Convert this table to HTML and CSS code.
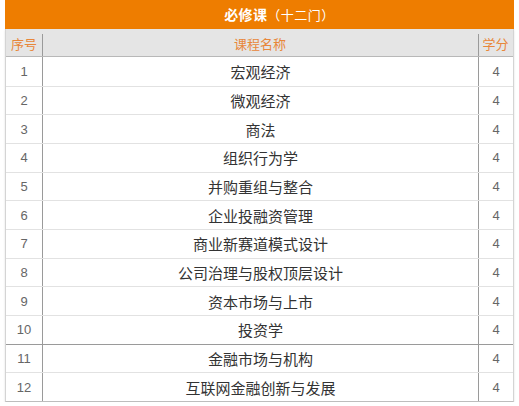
FILE: index.html
```html
<!DOCTYPE html>
<html lang="zh">
<head>
<meta charset="utf-8">
<link rel="stylesheet" href="styles.css">
</head>
<body>
<div class="wrap">
  <div class="title"><span class="strong">必修课</span><span class="sub">（十二门）</span></div>
  <div class="table">
    <div class="row head">
      <div class="c1">序号</div>
      <div class="c2">课程名称</div>
      <div class="c3">学分</div>
    </div>
    <div class="row"><div class="c1 num">1</div><div class="c2">宏观经济</div><div class="c3 num">4</div></div>
    <div class="row"><div class="c1 num">2</div><div class="c2">微观经济</div><div class="c3 num">4</div></div>
    <div class="row"><div class="c1 num">3</div><div class="c2">商法</div><div class="c3 num">4</div></div>
    <div class="row"><div class="c1 num">4</div><div class="c2">组织行为学</div><div class="c3 num">4</div></div>
    <div class="row"><div class="c1 num">5</div><div class="c2">并购重组与整合</div><div class="c3 num">4</div></div>
    <div class="row"><div class="c1 num">6</div><div class="c2">企业投融资管理</div><div class="c3 num">4</div></div>
    <div class="row"><div class="c1 num">7</div><div class="c2">商业新赛道模式设计</div><div class="c3 num">4</div></div>
    <div class="row"><div class="c1 num">8</div><div class="c2">公司治理与股权顶层设计</div><div class="c3 num">4</div></div>
    <div class="row"><div class="c1 num">9</div><div class="c2">资本市场与上市</div><div class="c3 num">4</div></div>
    <div class="row"><div class="c1 num">10</div><div class="c2">投资学</div><div class="c3 num">4</div></div>
    <div class="row dark"><div class="c1 num">11</div><div class="c2">金融市场与机构</div><div class="c3 num">4</div></div>
    <div class="row"><div class="c1 num">12</div><div class="c2">互联网金融创新与发展</div><div class="c3 num">4</div></div>
  </div>
</div>
</body>
</html>
```

FILE: styles.css
```css
html, body {
  margin: 0;
  padding: 0;
  background: #ffffff;
}
body {
  font-family: "Noto Sans CJK SC", "Liberation Sans", sans-serif;
}
.wrap {
  margin-left: 5px;
  width: 509px;
}
.title {
  height: 29px;
  background: #ee7d00;
  color: #ffffff;
  font-size: 14px;
  line-height: 29px;
  text-align: center;
  padding-left: 40px;
  text-spacing-trim: space-all;
}
.title .strong {
  font-weight: bold;
  letter-spacing: 0.3px;
}
.title .sub {
  font-weight: normal;
  font-size: 13px;
  letter-spacing: 0.5px;
}
.table {
  border-left: 1px solid #d4d4d4;
  border-right: 1px solid #d4d4d4;
  border-bottom: 1px solid #bdbdbd;
  box-shadow: 0 1px 2px rgba(0, 0, 0, 0.12);
}
.row {
  display: grid;
  grid-template-columns: 36px 436px 35px;
  height: 28.67px;
  box-sizing: border-box;
  border-top: 1px solid #e2e2e2;
}
.row > div {
  display: flex;
  align-items: center;
  justify-content: center;
  font-size: 15px;
  color: #333333;
}
.row .c2 {
  border-left: 1px solid #9a9a9a;
}
.row .c3 {
  border-left: 1px solid #9a9a9a;
}
.row .num {
  font-family: "Liberation Sans", sans-serif;
  font-size: 13px;
  color: #666666;
}
.row.dark {
  border-top: 1px solid #9a9a9a;
}
.row.head {
  height: 28px;
  border-top: none;
  background: #e5e5e5;
  border-bottom: 1px solid #b8b8b8;
}
.row.head > div {
  font-size: 13px;
  color: #e8873a;
  padding-top: 1px;
}
.row.head .c2,
.row.head .c3 {
  border-left: none;
  background-image: linear-gradient(#9a9a9a, #9a9a9a);
  background-size: 1px 22px;
  background-position: left bottom;
  background-repeat: no-repeat;
}
.row.head + .row {
  border-top: none;
}
```
